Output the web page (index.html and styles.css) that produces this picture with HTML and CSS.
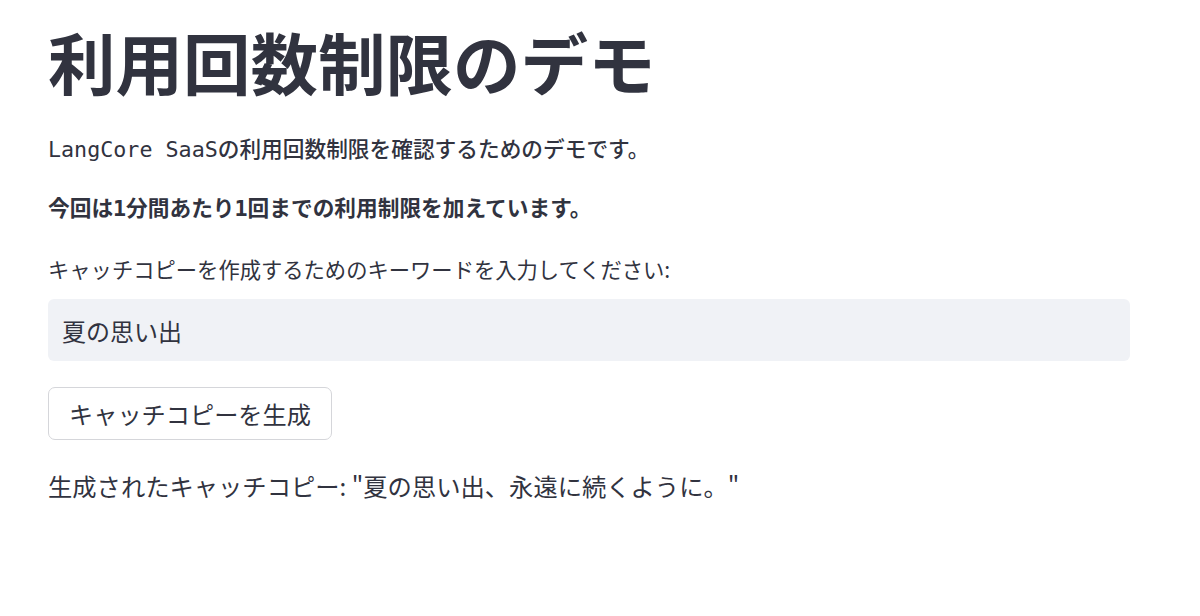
FILE: index.html
```html
<!DOCTYPE html>
<html lang="ja">
<head>
    <meta charset="UTF-8">
    <meta name="viewport" content="width=device-width, initial-scale=1.0">
    <title>利用回数制限のデモ</title>
    <link rel="stylesheet" href="styles.css">
</head>
<body>
    <div class="main">
        <h1 class="title">利用回数制限のデモ</h1>
        <p class="text-mono">LangCore SaaSの利用回数制限を確認するためのデモです。</p>
        <p class="text-mono bold">今回は1分間あたり1回までの利用制限を加えています。</p>

        <div class="field">
            <label class="field-label" for="keyword">キャッチコピーを作成するためのキーワードを入力してください:</label>
            <input type="text" id="keyword" class="field-input" value="夏の思い出">
        </div>

        <button class="btn">キャッチコピーを生成</button>

        <p class="result">生成されたキャッチコピー: "夏の思い出、永遠に続くように。"</p>
    </div>
</body>
</html>
```

FILE: styles.css
```css
body {
    margin: 0;
    padding: 0;
    background: #ffffff;
    color: #31333f;
    font-family: "Noto Sans CJK JP", "Noto Sans", sans-serif;
}
.main {
    width: 1082px;
    padding: 21px 0 0 48px;
}
.title {
    margin: 0;
    font-size: 67.5px;
    line-height: 80px;
    font-weight: 700;
    letter-spacing: 0;
}
.text-mono {
    margin: 33px 0 0;
    font-family: "DejaVu Sans Mono", "Noto Sans CJK JP", monospace;
    font-size: 21.7px;
    line-height: 32px;
    font-weight: 500;
    white-space: pre;
}
.text-mono.bold {
    margin-top: 27px;
    font-weight: 700;
}
.field {
    margin-top: 29px;
}
.field-label {
    display: block;
    font-size: 21.3px;
    line-height: 30px;
    font-weight: 400;
}
.field-input {
    display: block;
    box-sizing: border-box;
    width: 100%;
    height: 62px;
    margin-top: 15px;
    padding: 0 14px;
    background: #f0f2f6;
    border: none;
    border-radius: 6px;
    font-family: "Noto Sans CJK JP", sans-serif;
    font-size: 24px;
    color: #31333f;
    outline: none;
}
.btn {
    display: block;
    box-sizing: border-box;
    height: 53px;
    margin-top: 26px;
    padding: 0 20px 0 20px;
    background: #ffffff;
    border: 1px solid #d5d6da;
    border-radius: 7px;
    font-family: "Noto Sans CJK JP", sans-serif;
    font-size: 24.2px;
    color: #31333f;
    cursor: pointer;
}
.result {
    margin: 29px 0 0;
    font-size: 24.3px;
    line-height: 34px;
}
```
